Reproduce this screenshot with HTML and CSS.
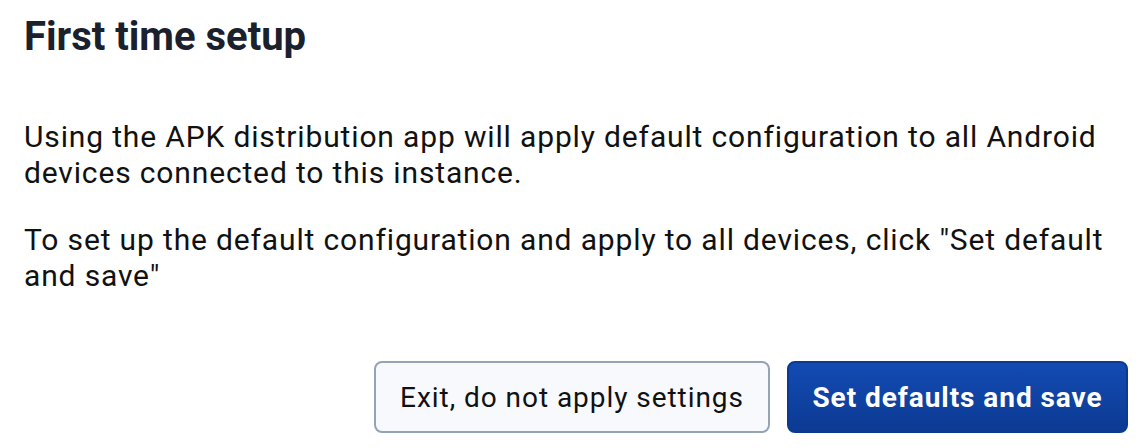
FILE: index.html
```html
<!DOCTYPE html>
<html>
<head>
<meta charset="utf-8">
<link rel="stylesheet" href="styles.css">
</head>
<body>
<div class="dialog">
  <h2 class="title">First time setup</h2>
  <div class="content">
    <p class="para">Using the APK distribution app will apply default configuration to all Android devices connected to this instance.</p>
    <p class="para">To set up the default configuration and apply to all devices, click "Set default and save"</p>
  </div>
  <div class="actions">
    <button class="btn btn-secondary">Exit, do not apply settings</button>
    <button class="btn btn-primary">Set defaults and save</button>
  </div>
</div>
</body>
</html>
```

FILE: styles.css
```css
html, body {
  margin: 0;
  padding: 0;
  background: #ffffff;
}
body {
  font-family: Roboto, "Liberation Sans", sans-serif;
}
.dialog {
  width: 1148px;
  height: 448px;
  box-sizing: border-box;
  padding: 13px 20px 0 24px;
  display: flex;
  flex-direction: column;
}
.title {
  margin: 0;
  font-size: 40px;
  line-height: 48px;
  font-weight: 700;
  color: #1a202c;
}
.content {
  margin-top: 58px;
}
.para {
  margin: 0 0 31px 0;
  font-size: 30px;
  line-height: 36px;
  letter-spacing: 0.85px;
  color: #111111;
}
.actions {
  margin-top: 36px;
  display: flex;
  justify-content: flex-end;
  gap: 17px;
}
.btn {
  height: 72px;
  box-sizing: border-box;
  border-radius: 8px;
  font-family: Roboto, "Liberation Sans", sans-serif;
  font-size: 28px;
  padding: 0 20px;
  letter-spacing: 0.95px;
}
.btn-secondary {
  width: 396px;
  background: #f7f9fc;
  border: 2px solid #94a3b8;
  color: #111111;
  font-weight: 400;
}
.btn-primary {
  width: 341px;
  background: linear-gradient(#134bb3, #0c3a93);
  border: 2px solid #0c3a93;
  color: #ffffff;
  font-weight: 700;
}
```
